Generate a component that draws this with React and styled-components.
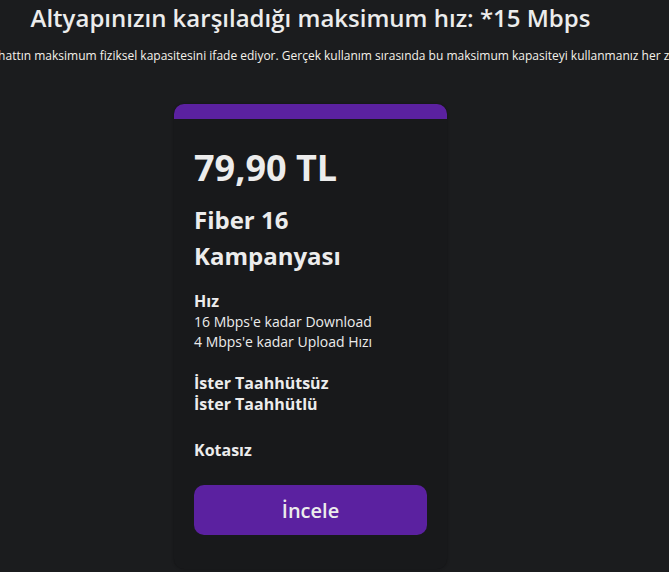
import styled, { createGlobalStyle } from "styled-components";

const GlobalStyle = createGlobalStyle`
  html, body {
    margin: 0;
    padding: 0;
    background: #1b1c1e;
    overflow: hidden;
  }
  body {
    font-family: "Open Sans", "Noto Sans", sans-serif;
    color: #ececec;
  }
`;

const Page = styled.div`
  width: 621px;
  height: 572px;
  display: flex;
  flex-direction: column;
  align-items: center;
`;

const Title = styled.h2`
  margin: 0;
  font-size: 24px;
  font-weight: 600;
  line-height: 36px;
  white-space: nowrap;
`;

const Note = styled.p`
  margin: 11px 0 0 140px;
  font-size: 12px;
  line-height: 18px;
  white-space: nowrap;
  color: #f4f1ea;
`;

const Card = styled.div`
  margin-top: 39px;
  width: 273px;
  box-sizing: border-box;
  background: #18191b;
  border-radius: 10px;
  overflow: hidden;
  box-shadow: 0 0 3px rgba(0, 0, 0, 0.35);
`;

const TopBar = styled.div`
  height: 15px;
  background: #5b21a0;
`;

const Body = styled.div`
  padding: 25px 20px 34px;
  display: flex;
  flex-direction: column;
`;

const Price = styled.div`
  font-size: 36px;
  font-weight: 700;
  line-height: 48px;
`;

const Name = styled.div`
  margin-top: 10px;
  font-size: 24px;
  font-weight: 700;
  line-height: 36px;
`;

const Section = styled.div`
  margin-top: ${(p) => p.$gap || 0}px;
`;

const Label = styled.div`
  font-size: 16px;
  font-weight: 700;
  line-height: ${(p) => p.$lh || 21}px;
`;

const Line = styled.div`
  font-size: 14px;
  line-height: 20px;
`;

const Button = styled.button`
  margin-top: 24px;
  height: 50px;
  width: 100%;
  border: none;
  border-radius: 10px;
  background: #5b21a0;
  color: #ececec;
  font-family: inherit;
  font-size: 20px;
  font-weight: 600;
  cursor: pointer;
`;

export default function App() {
  return (
    <>
      <GlobalStyle />
      <Page>
        <Title>Altyapınızın karşıladığı maksimum hız: *15 Mbps</Title>
        <Note>
          *Bu değer hattın maksimum fiziksel kapasitesini ifade ediyor. Gerçek
          kullanım sırasında bu maksimum kapasiteyi kullanmanız her zaman mümkün
          olmayabilir.
        </Note>
        <Card>
          <TopBar />
          <Body>
            <Price>79,90 TL</Price>
            <Name>
              Fiber 16
              <br />
              Kampanyası
            </Name>
            <Section $gap={16}>
              <Label $lh={22}>Hız</Label>
              <Line>16 Mbps'e kadar Download</Line>
              <Line>4 Mbps'e kadar Upload Hızı</Line>
            </Section>
            <Section $gap={21}>
              <Label>İster Taahhütsüz</Label>
              <Label>İster Taahhütlü</Label>
            </Section>
            <Section $gap={25}>
              <Label>Kotasız</Label>
            </Section>
            <Button>İncele</Button>
          </Body>
        </Card>
      </Page>
    </>
  );
}
